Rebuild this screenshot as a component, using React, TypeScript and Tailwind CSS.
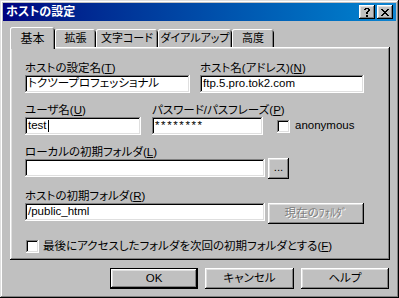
import React from "react";

const raised =
  "shadow-[inset_-1px_-1px_#000,inset_1px_1px_#fff,inset_-2px_-2px_#808080,inset_2px_2px_#dfdfdf]";
const sunken =
  "shadow-[inset_-1px_-1px_#fff,inset_1px_1px_#808080,inset_-2px_-2px_#dfdfdf,inset_2px_2px_#000]";

function U({ c }: { c: string }) {
  return <span className="underline underline-offset-[1px] decoration-1">{c}</span>;
}

function Label({ children }: { children: React.ReactNode }) {
  return <div className="h-[14px] leading-[14px] whitespace-nowrap">{children}</div>;
}

function Field({ children, w }: { children?: React.ReactNode; w: number }) {
  return (
    <div
      className={`flex-none h-[18px] bg-white ${sunken} pl-[3px] flex items-center whitespace-nowrap overflow-hidden`}
      style={{ width: w }}
    >
      {children}
    </div>
  );
}

function PixelGlyph({ rows }: { rows: string[] }) {
  const px: [number, number][] = [];
  rows.forEach((r, y) => r.split("").forEach((ch, x) => ch === "#" && px.push([x, y])));
  return (
    <svg width={rows[0].length} height={rows.length} viewBox={`0 0 ${rows[0].length} ${rows.length}`} shapeRendering="crispEdges">
      {px.map(([x, y]) => (
        <rect key={`${x}-${y}`} x={x} y={y} width="1" height="1" fill="#000" />
      ))}
    </svg>
  );
}

function Tab({ label, w, selected = false }: { label: string; w: number; selected?: boolean }) {
  if (selected) {
    return (
      <div
        className="flex-none relative z-10 h-[22px] -mb-[2px] bg-[#c0c0c0] rounded-t-[3px] shadow-[inset_1px_0_#fff,inset_0_1px_#fff,inset_-1px_0_#000,inset_-2px_0_#808080] flex items-start justify-center pt-[3px] whitespace-nowrap text-[12px]"
        style={{ width: w }}
      >
        {label}
      </div>
    );
  }
  return (
    <div
      className="flex-none h-[18px] bg-[#c0c0c0] rounded-t-[3px] shadow-[inset_1px_0_#fff,inset_0_1px_#fff,inset_-1px_0_#000,inset_-2px_0_#808080] flex items-center justify-center whitespace-nowrap text-[11px] pt-[1px]"
      style={{ width: w }}
    >
      {label}
    </div>
  );
}

function Btn({ children, w, def = false }: { children: React.ReactNode; w: number; def?: boolean }) {
  if (def) {
    return (
      <div className="flex-none h-[21px] border border-black" style={{ width: w }}>
        <div className={`w-full h-full ${raised} flex items-center justify-center`}>{children}</div>
      </div>
    );
  }
  return (
    <div className={`flex-none h-[21px] ${raised} flex items-center justify-center`} style={{ width: w }}>
      {children}
    </div>
  );
}

export default function App() {
  return (
    <div className="w-[399px] h-[298px] bg-[#c0c0c0] p-[3px] flex flex-col text-[11.5px] text-black [font-family:'Liberation_Sans','Noto_Sans_CJK_JP',sans-serif] [font-feature-settings:'palt'] shadow-[inset_-1px_-1px_#000,inset_1px_1px_#dfdfdf,inset_-2px_-2px_#808080,inset_2px_2px_#fff]">
      {/* Title bar */}
      <div className="flex-none h-[18px] flex items-center justify-between pl-[3px] pr-[3px] bg-gradient-to-r from-[#000080] to-[#1084d0]">
        <span className="text-white font-bold text-[12px] leading-none">ホストの設定</span>
        <div className="flex gap-[2px]">
          <div className={`w-[16px] h-[14px] bg-[#c0c0c0] ${raised} flex items-center justify-center`}>
            <PixelGlyph rows={[".####.", "##..##", "....##", "...##.", "..##..", "..##..", "......", "..##..", "..##.."]} />
          </div>
          <div className={`w-[16px] h-[14px] bg-[#c0c0c0] ${raised} flex items-center justify-center`}>
            <PixelGlyph rows={["##....##", ".##..##.", "..####..", "...##...", "..####..", ".##..##.", "##....##"]} />
          </div>
        </div>
      </div>

      <div className="flex flex-col pl-[7px] pr-[6px] pt-[6px]">
        {/* Tabs */}
        <div className="flex items-end h-[20px]">
          <Tab label="基本" w={45} selected />
          <Tab label="拡張" w={41} />
          <Tab label="文字コード" w={62} />
          <Tab label="ダイアルアップ" w={74} />
          <Tab label="高度" w={42} />
        </div>

        {/* Panel */}
        <div className={`h-[213px] ${raised} pl-[15px] pt-[14px] flex flex-col`}>
          <div className="grid grid-cols-[165px_164px] gap-x-[10px]">
            <Label>
              ホストの設定名(<U c="T" />)
            </Label>
            <Label>
              ホスト名(アドレス)(<U c="N" />)
            </Label>
            <Field w={165}>トクツープロフェッショナル</Field>
            <Field w={164}>ftp.5.pro.tok2.com</Field>
          </div>

          <div className="grid grid-cols-[116px_111px_auto] gap-x-[11px] mt-[10px]">
            <Label>
              ユーザ名(<U c="U" />)
            </Label>
            <Label>
              パスワード/パスフレーズ(<U c="P" />)
            </Label>
            <div />
            <Field w={116}>
              test<span className="inline-block w-px h-[12px] bg-black ml-px" />
            </Field>
            <Field w={111}>
              <span className="tracking-[1.6px]">********</span>
            </Field>
            <div className="h-[18px] pl-[3px] flex items-center">
              <div className={`flex-none w-[13px] h-[13px] bg-white ${sunken}`} />
              <span className="ml-[5px]">anonymous</span>
            </div>
          </div>

          <div className="flex flex-col mt-[10px]">
            <Label>
              ローカルの初期フォルダ(<U c="L" />)
            </Label>
            <div className="flex items-start">
              <Field w={240} />
              <div className={`flex-none w-[21px] h-[21px] -mt-[1px] ml-[3px] ${raised} flex items-center justify-center leading-none pb-[2px]`}>
                ...
              </div>
            </div>
          </div>

          <div className="flex flex-col mt-[10px]">
            <Label>
              ホストの初期フォルダ(<U c="R" />)
            </Label>
            <div className="flex items-start">
              <Field w={240}>/public_html</Field>
              <div className={`flex-none w-[96px] h-[21px] ml-[3px] ${raised} flex items-center justify-center text-[#808080] [text-shadow:1px_1px_0_#fff]`}>
                現在のﾌｫﾙﾀﾞ
              </div>
            </div>
          </div>

          <div className="flex items-center mt-[14px] ml-[1px]">
            <div className={`flex-none w-[13px] h-[13px] bg-white ${sunken}`} />
            <span className="ml-[4px] whitespace-nowrap">
              最後にアクセスしたフォルダを次回の初期フォルダとする(<U c="F" />)
            </span>
          </div>
        </div>

        {/* Buttons */}
        <div className="flex justify-end gap-[7px] mt-[8px] pr-[1px]">
          <Btn w={88} def>
            OK
          </Btn>
          <Btn w={89}>キャンセル</Btn>
          <Btn w={88}>ヘルプ</Btn>
        </div>
      </div>
    </div>
  );
}
